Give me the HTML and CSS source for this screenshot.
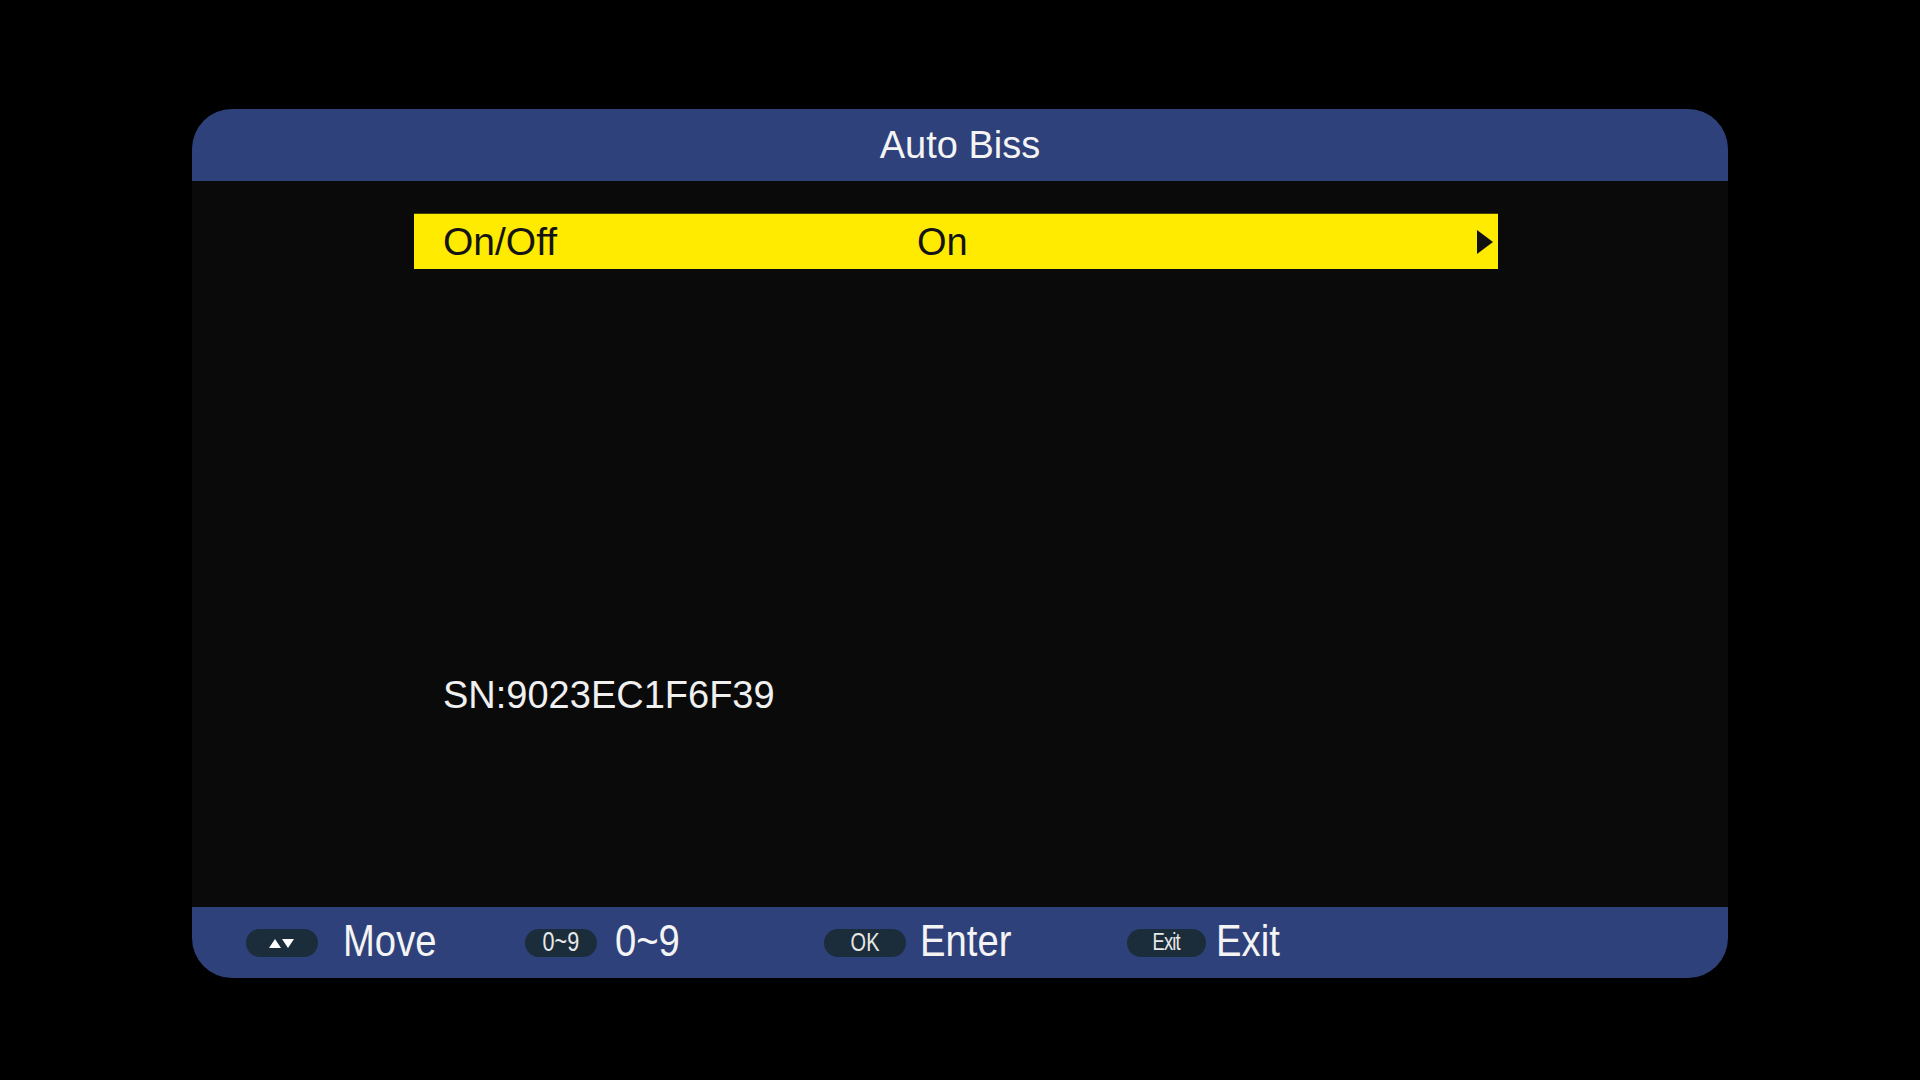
FILE: index.html
```html
<!DOCTYPE html>
<html>
<head>
<meta charset="utf-8">
<link rel="stylesheet" href="styles.css">
</head>
<body>
<div class="screen">
  <div class="panel">
    <div class="header">Auto Biss</div>
    <div class="main">
      <div class="row">
        <span class="row-label">On/Off</span>
        <span class="row-value">On</span>
        <span class="row-arrow"></span>
      </div>
      <div class="sn">SN:9023EC1F6F39</div>
    </div>
    <div class="footer">
      <div class="item item-move">
        <span class="badge badge-move">
          <svg width="26" height="12" viewBox="0 0 26 12"><polygon points="0,11 6,2 12,11" fill="#fff"/><polygon points="13,2 25,2 19,11" fill="#fff"/></svg>
        </span>
        <span class="label">Move</span>
      </div>
      <div class="item item-num">
        <span class="badge badge-num"><span class="btxt">0~9</span></span>
        <span class="label">0~9</span>
      </div>
      <div class="item item-ok">
        <span class="badge badge-ok"><span class="btxt">OK</span></span>
        <span class="label">Enter</span>
      </div>
      <div class="item item-exit">
        <span class="badge badge-exit"><span class="btxt">Exit</span></span>
        <span class="label">Exit</span>
      </div>
    </div>
  </div>
</div>
</body>
</html>
```

FILE: styles.css
```css
html, body {
  margin: 0;
  padding: 0;
  background: #000;
}
.screen {
  width: 1920px;
  height: 1080px;
  padding: 109px 0 0 192px;
  box-sizing: border-box;
}
.panel {
  width: 1536px;
  height: 869px;
  display: flex;
  flex-direction: column;
  background: #0a0a0a;
  border-radius: 40px;
  overflow: hidden;
  font-family: "Liberation Sans", Arial, sans-serif;
  color: #f2f2f2;
}
.header {
  height: 72px;
  flex: none;
  background: #2e417a;
  display: flex;
  align-items: center;
  justify-content: center;
  font-size: 38px;
  color: #f4f4f4;
}
.main {
  flex: 1;
  padding: 32px 0 0 222px;
  display: flex;
  flex-direction: column;
}
.row {
  width: 1084px;
  height: 56px;
  box-sizing: border-box;
  background: #ffeb00;
  border-top: 1px solid #4a4200;
  display: flex;
  align-items: center;
  padding: 0 5px 0 29px;
  color: #141414;
  font-size: 38px;
}
.row-label {
  width: 474px;
  font-size: 39px;
}
.row-value {
  flex: 1;
  padding-top: 2px;
}
.row-arrow {
  width: 0;
  height: 0;
  border-top: 12px solid transparent;
  border-bottom: 12px solid transparent;
  border-left: 16px solid #111;
}
.sn {
  margin-top: 404px;
  padding-left: 29px;
  font-size: 38px;
  line-height: 44px;
  color: #f0f0f0;
}
.footer {
  height: 71px;
  flex: none;
  background: #2e417a;
  display: flex;
  align-items: center;
  padding-left: 54px;
}
.item {
  display: flex;
  align-items: center;
}
.item-move { width: 279px; }
.item-num { width: 299px; }
.item-ok { width: 303px; }
.badge {
  height: 28px;
  border-radius: 14px;
  background: #1b2d3b;
  display: flex;
  align-items: center;
  justify-content: center;
  color: #e8e8e8;
  font-size: 24px;
}
.btxt {
  display: inline-block;
  transform: scaleX(0.8);
}
.badge-move { width: 72px; margin-right: 25px; }
.badge-num { width: 72px; margin-right: 18px; font-size: 27px; }
.badge-ok { width: 82px; margin-right: 14px; font-size: 25px; }
.badge-exit { width: 79px; margin-right: 10px; font-size: 23px; letter-spacing: -1px; }
.label {
  display: inline-block;
  font-size: 45px;
  color: #f4f4f4;
  transform: translateY(-2px) scaleX(0.85);
  transform-origin: left center;
}
```
